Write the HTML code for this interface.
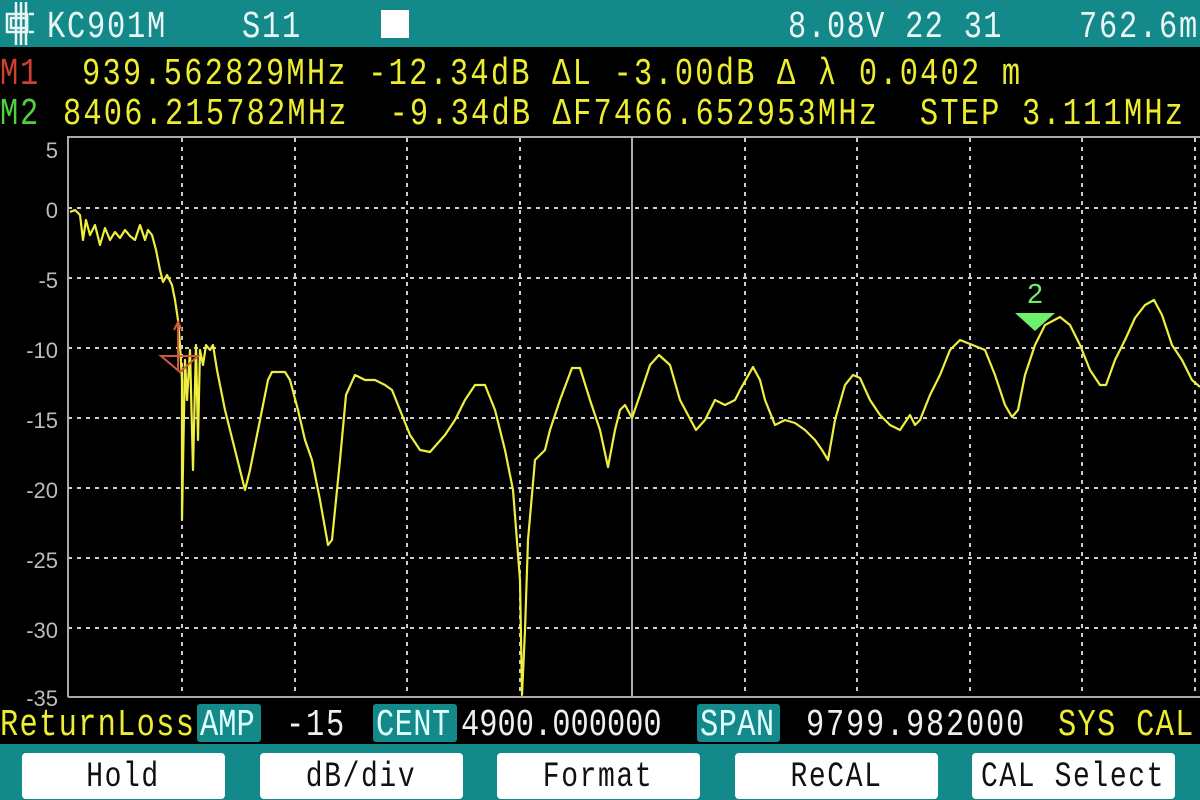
<!DOCTYPE html>
<html><head><meta charset="utf-8"><style>
html,body{margin:0;padding:0;background:#000;}
body{width:1200px;height:800px;position:relative;overflow:hidden;font-family:"Liberation Mono",monospace;}
.t{position:absolute;white-space:pre;line-height:1;transform-origin:0 0;font-size:38px;transform:scaleX(0.8);letter-spacing:2.2px;}
.hdr{position:absolute;left:0;top:0;width:1200px;height:47px;background:#14898a;}
.btnrow{position:absolute;left:0;top:744px;width:1200px;height:56px;background:#14898a;}
.btn{position:absolute;top:9px;height:46px;width:203px;background:#fff;border-radius:4px;color:#111;text-align:center;line-height:48px;overflow:hidden;}
.btn span{display:inline-block;font-size:35px;transform:scaleX(0.8);letter-spacing:2px;white-space:pre;margin:0 -30px;}
.tag{position:absolute;top:704px;height:38px;background:#14898a;border-radius:3px;}
</style></head><body>
<div class="hdr"></div>
<svg style="position:absolute;left:0;top:0" width="50" height="47">
<g stroke="#e8f4f4" stroke-width="2.5" fill="none">
<line x1="16" y1="2" x2="16" y2="45"/><line x1="21" y1="2" x2="21" y2="45"/><line x1="26" y1="2" x2="26" y2="45"/>
<rect x="7" y="14" width="20" height="18"/><rect x="11" y="18" width="16" height="10"/>
<path d="M29 14 H34 M29 32 H34 M27 14 v18"/>
</g></svg>
<div class="t" style="left:47px;top:9px;color:#e8f6f6">KC901M</div>
<div class="t" style="left:242px;top:9px;color:#e8f6f6">S11</div>
<div style="position:absolute;left:381px;top:10px;width:28px;height:28px;background:#fff"></div>
<div class="t" style="left:788px;top:9px;color:#e8f6f6;letter-spacing:1.6px">8.08V 22 31</div>
<div class="t" style="left:1079px;top:9px;color:#e8f6f6">762.6m</div>

<div class="t" style="left:0px;top:56px;color:#d04030">M1</div>
<div class="t" style="left:0px;top:96px;color:#50d040">M2</div>
<div class="t" style="left:82px;top:56px;color:#ecec30;letter-spacing:2.75px">939.562829MHz -12.34dB ΔL -3.00dB Δ λ 0.0402 m</div>
<div class="t" style="left:63px;top:96px;color:#ecec30;letter-spacing:2.7px">8406.215782MHz  -9.34dB ΔF7466.652953MHz  STEP 3.111MHz</div>

<svg style="position:absolute;left:0;top:0" width="1200" height="800">
<g fill="#bbb" font-family="Liberation Sans,sans-serif" font-size="22" text-anchor="end">
<text x="58" y="158">5</text><text x="58" y="218">0</text><text x="58" y="288">-5</text>
<text x="58" y="358">-10</text><text x="58" y="428">-15</text><text x="58" y="498">-20</text>
<text x="58" y="568">-25</text><text x="58" y="638">-30</text><text x="58" y="706">-35</text>
</g>
<g stroke="#ccc" stroke-width="2" stroke-dasharray="4,5" fill="none">
<line x1="68" y1="208" x2="1200" y2="208"/><line x1="68" y1="278" x2="1200" y2="278"/>
<line x1="68" y1="348" x2="1200" y2="348"/><line x1="68" y1="418" x2="1200" y2="418"/>
<line x1="68" y1="488" x2="1200" y2="488"/><line x1="68" y1="558" x2="1200" y2="558"/>
<line x1="68" y1="628" x2="1200" y2="628"/>
<line x1="182" y1="138" x2="182" y2="697"/><line x1="295" y1="138" x2="295" y2="697"/>
<line x1="407" y1="138" x2="407" y2="697"/><line x1="520" y1="138" x2="520" y2="697"/>
<line x1="745" y1="138" x2="745" y2="697"/><line x1="857" y1="138" x2="857" y2="697"/>
<line x1="970" y1="138" x2="970" y2="697"/><line x1="1082" y1="138" x2="1082" y2="697"/>
<line x1="1195" y1="138" x2="1195" y2="697"/>
</g>
<g stroke="#aaa" stroke-width="2" fill="none">
<path d="M68 697 V137 H1200 M68 697 H1200"/>
<line x1="632" y1="137" x2="632" y2="697"/>
</g>
<polyline fill="none" stroke="#eeee40" stroke-width="2.2" stroke-linejoin="round" points="70,212 75,210 80,215 83,240 86,220 90,235 95,225 100,245 105,228 110,240 115,232 120,238 125,230 130,236 135,240 140,225 145,240 148,230 152,235 156,250 160,270 163,282 167,275 172,285 175,300 178,320 180,345 182,380 182,520 185,360 187,400 190,350 193,470 196,345 198,440 200,350 203,365 206,345 210,350 213,345 217,370 225,410 235,450 245,490 250,470 260,420 268,380 272,372 285,372 290,380 298,410 305,440 312,460 320,500 328,545 332,540 340,460 346,395 355,375 365,380 375,380 385,385 392,390 400,410 410,435 420,450 430,452 445,435 455,420 465,400 475,385 485,385 495,410 505,450 513,490 520,580 522,695 525,630 528,540 535,460 545,450 550,430 560,400 572,368 580,368 590,400 600,430 608,467 615,430 620,410 625,405 632,418 640,395 650,365 659,355 670,365 680,400 696,430 705,420 715,400 725,405 735,400 740,390 753,367 760,380 765,400 775,425 785,420 795,423 805,430 815,440 822,450 828,460 835,420 845,385 853,375 860,378 870,400 880,415 890,425 900,430 910,415 915,425 920,420 930,395 940,375 950,350 960,340 970,344 985,350 995,375 1005,405 1012,417 1018,410 1025,375 1035,345 1045,325 1060,317 1070,325 1080,345 1090,370 1100,385 1106,385 1115,360 1125,340 1135,318 1145,305 1154,300 1162,315 1172,345 1182,360 1192,380 1200,387"/>
<g stroke="#d05a40" stroke-width="2" fill="none">
<path d="M161 356 H198 L180 372 Z"/>
<path d="M178 322 V370 M174 330 L178 322 L182 330"/>
</g>
<path d="M1015 313 H1055 L1035 331 Z" fill="#6ef06a"/>
<text x="1035" y="303" fill="#6ef06a" font-size="28" font-family="Liberation Sans,sans-serif" text-anchor="middle">2</text>
</svg>

<div class="tag" style="left:197px;width:64px"></div>
<div class="tag" style="left:373px;width:84px"></div>
<div class="tag" style="left:697px;width:83px"></div>
<div class="t" style="left:0px;top:707px;color:#ecec30;letter-spacing:1.6px">ReturnLoss</div>
<div class="t" style="left:200px;top:707px;color:#e0ffff;letter-spacing:0">AMP</div>
<div class="t" style="left:286px;top:707px;color:#eee">-15</div>
<div class="t" style="left:376px;top:707px;color:#e0ffff;letter-spacing:0.5px">CENT</div>
<div class="t" style="left:461px;top:707px;color:#eee;letter-spacing:0">4900.000000</div>
<div class="t" style="left:700px;top:707px;color:#e0ffff;letter-spacing:0.5px">SPAN</div>
<div class="t" style="left:806px;top:707px;color:#eee">9799.982000</div>
<div class="t" style="left:1058px;top:707px;color:#ecec30;letter-spacing:1.6px">SYS CAL</div>

<div class="btnrow">
<div class="btn" style="left:22px"><span>Hold</span></div>
<div class="btn" style="left:260px"><span>dB/div</span></div>
<div class="btn" style="left:497px"><span>Format</span></div>
<div class="btn" style="left:735px"><span>ReCAL</span></div>
<div class="btn" style="left:972px"><span>CAL Select</span></div>
</div>
</body></html>
